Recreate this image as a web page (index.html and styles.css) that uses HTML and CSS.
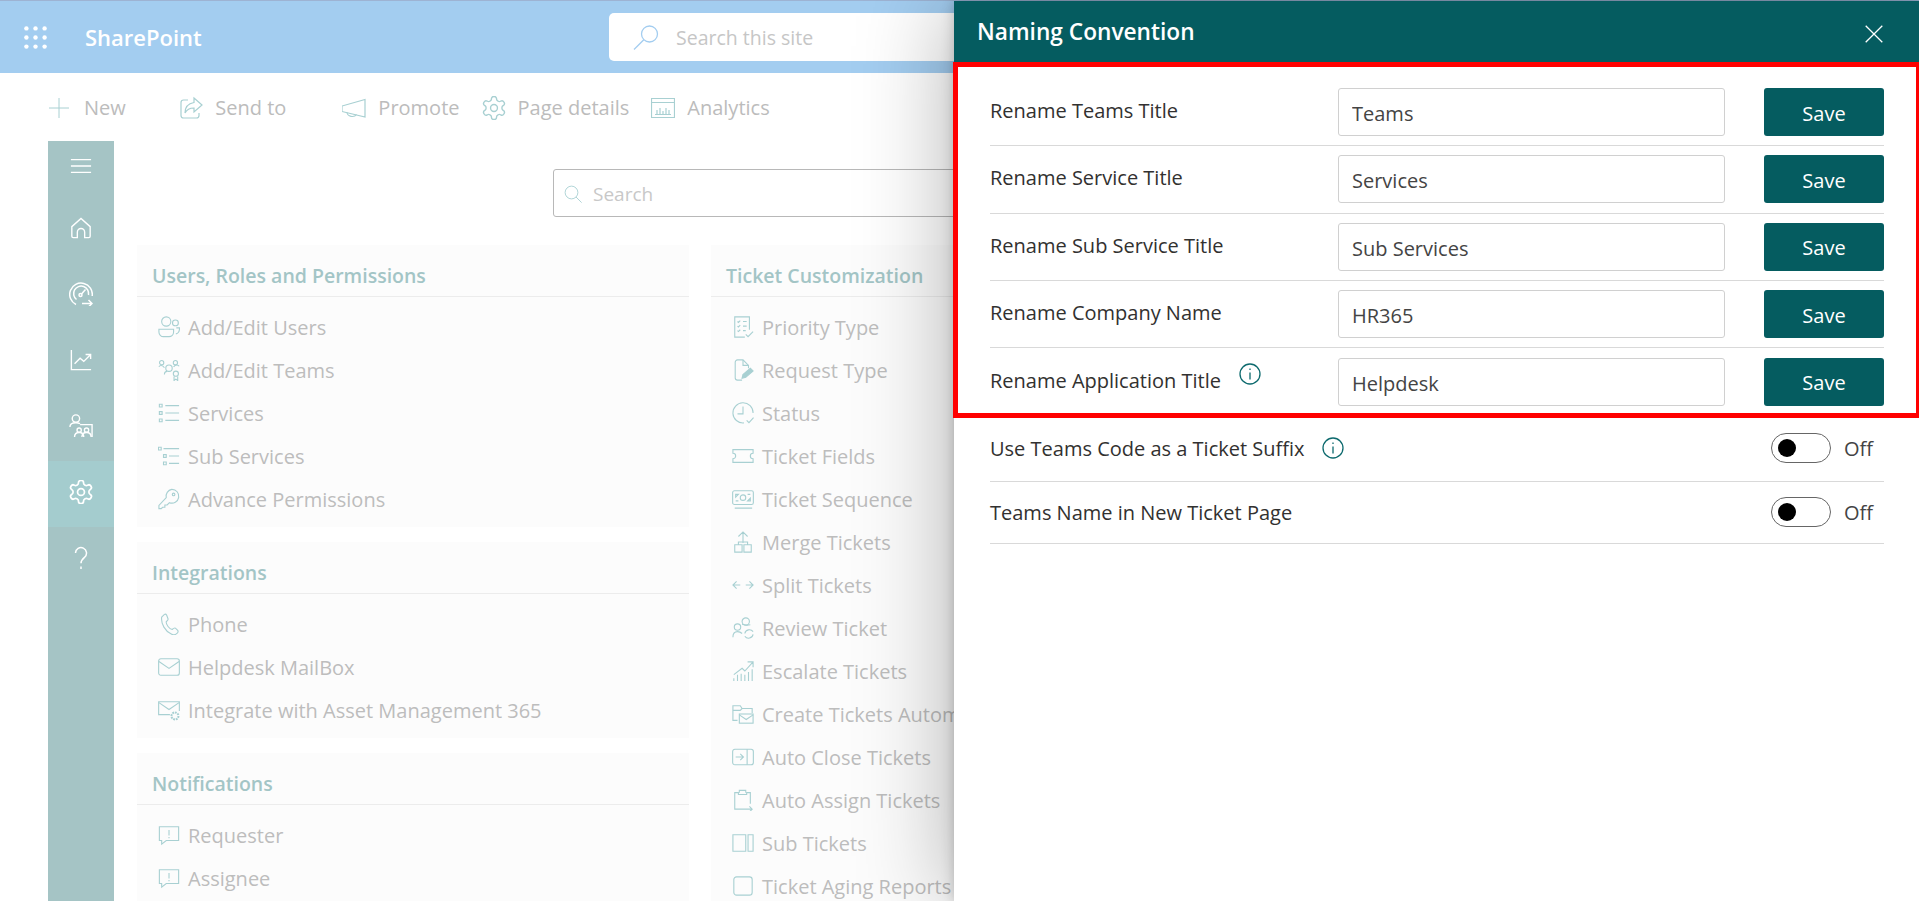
FILE: index.html
```html
<!DOCTYPE html>
<html lang="en">
<head>
    <meta charset="UTF-8">
    <title>Naming Convention</title>
    <link rel="stylesheet" href="styles.css">
</head>
<body>

    <svg class="defs" width="0" height="0">
        <symbol id="gear" viewBox="1.600 1.600 20.800 20.800">
            <path d="M12.22 2h-.44a2 2 0 0 0-2 2v.18a2 2 0 0 1-1 1.73l-.43.25a2 2 0 0 1-2 0l-.15-.08a2 2 0 0 0-2.73.73l-.22.38a2 2 0 0 0 .73 2.73l.15.1a2 2 0 0 1 1 1.72v.51a2 2 0 0 1-1 1.74l-.15.09a2 2 0 0 0-.73 2.73l.22.38a2 2 0 0 0 2.73.73l.15-.08a2 2 0 0 1 2 0l.43.25a2 2 0 0 1 1 1.73V20a2 2 0 0 0 2 2h.44a2 2 0 0 0 2-2v-.18a2 2 0 0 1 1-1.73l.43-.25a2 2 0 0 1 2 0l.15.08a2 2 0 0 0 2.73-.73l.22-.39a2 2 0 0 0-.73-2.73l-.15-.08a2 2 0 0 1-1-1.74v-.5a2 2 0 0 1 1-1.74l.15-.09a2 2 0 0 0 .73-2.73l-.22-.38a2 2 0 0 0-2.73-.73l-.15.08a2 2 0 0 1-2 0l-.43-.25a2 2 0 0 1-1-1.73V4a2 2 0 0 0-2-2z"/>
            <circle cx="12" cy="12" r="3"/>
        </symbol>
        <symbol id="info" viewBox="0 0 22 22">
            <circle cx="11" cy="11" r="10"/>
            <path d="M11 9.500v7M11 5.500v1.600"/>
        </symbol>
        <symbol id="alert" viewBox="0 0 24 24">
            <path d="M1.500 3h21v15H9l-5 4v-4H1.500z"/>
            <path d="M12 6.500v6M12 14.200v1.300"/>
        </symbol>
    </svg>

    <header class="topbar">
        <svg class="waffle" viewBox="0 0 24 24">
            <circle cx="2.500" cy="2.500" r="2.300"/><circle cx="12" cy="2.500" r="2.300"/><circle cx="21.500" cy="2.500" r="2.300"/>
            <circle cx="2.500" cy="12" r="2.300"/><circle cx="12" cy="12" r="2.300"/><circle cx="21.500" cy="12" r="2.300"/>
            <circle cx="2.500" cy="21.500" r="2.300"/><circle cx="12" cy="21.500" r="2.300"/><circle cx="21.500" cy="21.500" r="2.300"/>
        </svg>
        <span class="brand">SharePoint</span>
        <div class="site-search">
            <svg class="site-search-icon" viewBox="0 0 26 25"><circle cx="16.500" cy="9" r="8"/><path d="M10.800 14.800L1 24.500"/></svg>
            <span>Search this site</span>
        </div>
    </header>

    <nav class="commandbar">
        <div class="cmd cmd-new">
            <svg class="ico cmd-ico cmd-plus" viewBox="0 0 24 24"><path d="M12 0v24M0 12h24"/></svg>
            <span>New</span>
        </div>
        <div class="cmd cmd-send">
            <svg class="ico cmd-ico" viewBox="0 0 24 24"><path d="M9 4H4.500A2.500 2.500 0 0 0 2 6.500v13A2.500 2.500 0 0 0 4.500 22h13a2.500 2.500 0 0 0 2.500-2.500V17"/><path d="M15 2l8 7-8 7v-4c-4 0-7 1-9 5 0-6 3-9.500 9-10.500z"/></svg>
            <span>Send to</span>
        </div>
        <div class="cmd">
            <svg class="ico cmd-ico" viewBox="0 0 24 24"><path d="M0 10L23 3.500V21L0 15.500z"/><path d="M5 16.500c.5 4 7 5.500 9.500 2"/></svg>
            <span>Promote</span>
        </div>
        <div class="cmd">
            <svg class="ico cmd-ico"><use href="#gear"/></svg>
            <span>Page details</span>
        </div>
        <div class="cmd">
            <svg class="ico cmd-ico" viewBox="0 0 24 24"><path d="M.5 2.500h23v19H.5zM.5 6.500h23"/><path d="M4 18.500h16M6 18v-4M9 18v-6M12 18v-3M15 18v-6M18 18v-4"/></svg>
            <span>Analytics</span>
        </div>
    </nav>

    <div class="main">
        <aside class="rail">
            <div class="rail-item rail-toggle">
                <svg class="ico rail-ico" viewBox="0 0 24 24"><path d="M1 5h22M1 12h22M1 19h22"/></svg>
            </div>
            <div class="rail-item">
                <svg class="ico rail-ico" viewBox="0 0 24 24"><path d="M2 21V10.500L12 1.500l10 9V21a1.500 1.500 0 0 1-1.500 1.500H16v-6a4 4 0 0 0-8 0v6H3.500A1.500 1.500 0 0 1 2 21z"/></svg>
            </div>
            <div class="rail-item">
                <svg class="ico rail-ico rail-ico-wide" viewBox="0 0 24 24"><path d="M7 22.500A11.300 11.300 0 1 1 23.200 14"/><path d="M7.500 17.500a7.500 7.500 0 1 1 12-4.500"/><circle cx="11.500" cy="13" r="1.500"/><path d="M12.500 12l4-4.500M13 21.500h10M19.500 18l3.500 3.500-3.500 3.500"/></svg>
            </div>
            <div class="rail-item">
                <svg class="ico rail-ico" viewBox="0 0 24 24"><path d="M1.500 1v21.500H23"/><path d="M5 16l6-6 4 3.500L22 6.500M17 6h5.500v5"/></svg>
            </div>
            <div class="rail-item">
                <svg class="ico rail-ico rail-ico-wide" viewBox="0 0 26 26"><circle cx="7.500" cy="5" r="4"/><path d="M1 14c0-3 3-4.500 6.500-4.500 1.500 0 3 .3 4.500 1"/><path d="M12 11.500h13V25"/><circle cx="11" cy="17.500" r="2.300"/><circle cx="19" cy="17.500" r="2.300"/><path d="M6 25c0-3 2-5 5-5s5 2 5 5M14 25c0-3 2-5 5-5s5 2 5 5"/></svg>
            </div>
            <div class="rail-item active">
                <svg class="ico rail-ico rail-ico-wide"><use href="#gear"/></svg>
            </div>
            <div class="rail-item">
                <svg class="ico rail-ico rail-ico-wide" viewBox="0 0 24 24"><path d="M6.500 7a5.500 5.500 0 1 1 9 4.300c-2 1.600-3.500 3-3.500 6"/><path d="M12 20.500V23"/></svg>
            </div>
        </aside>

        <div class="content">
            <div class="finder">
                <svg class="ico finder-ico" viewBox="0 0 24 24"><circle cx="10" cy="10" r="8.500"/><path d="M16 16l7.500 7.500"/></svg>
                <span>Search</span>
            </div>

            <div class="columns">
                <div class="column">
                    <section class="card">
                        <h3 class="card-title">Users, Roles and Permissions</h3>
                        <ul class="card-list">
                            <li><svg class="ico" viewBox="0 0 24 24"><circle cx="9" cy="6" r="5"/><circle cx="19" cy="7.500" r="3.200"/><path d="M1 14.500h16v3a5 5 0 0 1-5 5H6a5 5 0 0 1-5-5z"/><path d="M20 13h3.500c0 4-1 6-4 6.500"/></svg>Add/Edit Users</li>
                            <li><svg class="ico" viewBox="0 0 24 24"><circle cx="4" cy="4" r="2.300"/><circle cx="19" cy="4" r="2.300"/><circle cx="12" cy="10" r="3.500"/><circle cx="19.500" cy="16" r="2.800"/><path d="M1 8.500c1-2 4-2 6 1M23 8c-1-2-4-2-6 .5M7 17c0-2 1-3.500 3-3.500M17.500 19v4.500l2-1.500 2 1.500V19"/></svg>Add/Edit Teams</li>
                            <li><svg class="ico" viewBox="0 0 24 24"><path d="M1.500 2.500h3v3h-3zM1.500 10.500h3v3h-3zM1.500 18.500h3v3h-3zM8 4h15M8 12h15M8 20h15"/></svg>Services</li>
                            <li><svg class="ico" viewBox="0 0 24 24"><path d="M.5 2.500h3v3h-3zM6 10.500h3v3H6zM6 18.500h3v3H6zM6 4h17M12 12h11M12 20h11"/></svg>Sub Services</li>
                            <li><svg class="ico" viewBox="0 0 24 24"><path d="M15 1.500a7.500 7.500 0 1 1-2.500 14.500l-2.500 2.500H7.500V21H5l-1.500 1.500H1V19l8-8.500A7.500 7.500 0 0 1 15 1.500z"/><circle cx="17" cy="7" r="1.400"/></svg>Advance Permissions</li>
                        </ul>
                    </section>

                    <section class="card">
                        <h3 class="card-title">Integrations</h3>
                        <ul class="card-list">
                            <li><svg class="ico" viewBox="0 0 24 24"><path d="M4 4.500l3-3c1-.5 2 0 2.500 1l1.500 4c.3 1-.5 1.800-2 3-.5 3 3.500 8 6.500 8.500 1.500-1.500 2.500-2 3.500-1.500l2.500 2.500c.7 1 .5 2-.5 3-2 2-4 2.500-6.500 1C8 20 3 12 4 4.500z"/></svg>Phone</li>
                            <li><svg class="ico" viewBox="0 0 24 24"><rect x=".7" y="3" width="22.600" height="18" rx="2.500"/><path d="M1 6l11 7.500L23 6"/></svg>Helpdesk MailBox</li>
                            <li><svg class="ico" viewBox="0 0 24 24"><path d="M13 17H.7V3h22.600v10"/><path d="M1 4l11 7.500L23 4"/><circle cx="18.500" cy="18.500" r="3.800" stroke-dasharray="2 .9" stroke-width="2.200"/></svg>Integrate with Asset Management 365</li>
                        </ul>
                    </section>

                    <section class="card">
                        <h3 class="card-title">Notifications</h3>
                        <ul class="card-list">
                            <li><svg class="ico"><use href="#alert"/></svg>Requester</li>
                            <li><svg class="ico"><use href="#alert"/></svg>Assignee</li>
                        </ul>
                    </section>
                </div>

                <div class="column">
                    <section class="card">
                        <h3 class="card-title">Ticket Customization</h3>
                        <ul class="card-list">
                            <li><svg class="ico" viewBox="0 0 24 24"><path d="M19 15V1H3v22h11"/><path d="M6 6l1 1 2-2M12 6h4M6 11l1 1 2-2M12 11h4M6 16l1 1 2-2M12 16h3M15 20l2.500 2.500L23 17"/></svg>Priority Type</li>
                            <li><svg class="ico" viewBox="0 0 24 24"><path d="M11 23H6a2.500 2.500 0 0 1-2.500-2.500v-17A2.500 2.500 0 0 1 6 1h6l6 6v3"/><path d="M12 1v6h6"/><path class="solid" d="M11 21l1-4 8-7 3 3-8 7z"/></svg>Request Type</li>
                            <li><svg class="ico" viewBox="0 0 24 24"><path d="M13 22.800A11 11 0 1 1 23 12"/><path d="M12 5v8H6M16 20l2.500 2.500L23.500 17"/></svg>Status</li>
                            <li><svg class="ico" viewBox="0 0 24 24"><path d="M1 5h22v4a3 3 0 0 0 0 6v4H1v-4a3 3 0 0 0 0-6z"/></svg>Ticket Fields</li>
                            <li><svg class="ico" viewBox="0 0 24 24"><rect x=".7" y="3" width="22.600" height="15" rx="2"/><circle cx="12" cy="10.500" r="3"/><path d="M3 22h19M4 7h3l-3 3zM20 14h-3l3-3zM4 14h3M17 7h3"/></svg>Ticket Sequence</li>
                            <li><svg class="ico" viewBox="0 0 24 24"><path d="M3 15h8v8H3zM13 15h8v8h-8zM12 13V1M7 6l5-5 5 5M7 15v-3h10v3"/></svg>Merge Tickets</li>
                            <li><svg class="ico" viewBox="0 0 24 24"><path d="M1 12h8M5 8l-4 4 4 4M15 12h8M19 8l4 4-4 4"/></svg>Split Tickets</li>
                            <li><svg class="ico" viewBox="0 0 24 24"><circle cx="15" cy="5" r="4"/><circle cx="6" cy="11" r="3.500"/><path d="M1 22c0-4 2-6 5-6s4 1 5 2M11 8c3 1 6 1 9 .5"/><path d="M14 18a5 5 0 0 1 9-2M23 19a5 5 0 0 1-9 2"/></svg>Review Ticket</li>
                            <li><svg class="ico" viewBox="0 0 24 24"><path d="M2 16l9-7 3 3 9-10M17 2h6v6M2 23v-3M6 23v-7M10 23v-8M14 23v-7M18 23v-10M22 23V10"/></svg>Escalate Tickets</li>
                            <li><svg class="ico" viewBox="0 0 24 24"><path d="M6 19H1V3h8l2 3h11v5"/><path d="M1 8h8l2-2"/><rect x="8" y="12" width="15" height="10"/><path d="M8 13l7.500 5L23 13"/></svg>Create Tickets Automatically</li>
                            <li><svg class="ico" viewBox="0 0 24 24"><rect x=".7" y="3.500" width="22.600" height="17" rx="2.500"/><path d="M16.500 3.500v17M4 12h8M9 8.500l3.500 3.500L9 15.500"/></svg>Auto Close Tickets</li>
                            <li><svg class="ico" viewBox="0 0 24 24"><path d="M12 22H3V4h4v2h9V4h4v12"/><path d="M8 4V1.500h7V4M12 22h10M19 19l3 3-3 3"/></svg>Auto Assign Tickets</li>
                            <li><svg class="ico" viewBox="0 0 24 24"><path d="M1 3h14v18H1zM17.500 3H23v18h-5.500z"/></svg>Sub Tickets</li>
                            <li><svg class="ico" viewBox="0 0 24 24"><rect x="2" y="2" width="20" height="20" rx="3"/></svg>Ticket Aging Reports</li>
                        </ul>
                    </section>
                </div>
            </div>
        </div>
    </div>

    <div class="panel">
        <div class="panel-head">
            <h2>Naming Convention</h2>
            <svg class="panel-close" viewBox="0 0 18 18"><path d="M.7.700l16.600 16.600M17.300.700L.7 17.300"/></svg>
        </div>

        <div class="frame">
            <div class="row">
                <label class="row-label">Rename Teams Title</label>
                <input class="row-input" type="text" value="Teams">
                <button class="save">Save</button>
            </div>
            <div class="row">
                <label class="row-label">Rename Service Title</label>
                <input class="row-input" type="text" value="Services">
                <button class="save">Save</button>
            </div>
            <div class="row">
                <label class="row-label">Rename Sub Service Title</label>
                <input class="row-input" type="text" value="Sub Services">
                <button class="save">Save</button>
            </div>
            <div class="row">
                <label class="row-label">Rename Company Name</label>
                <input class="row-input" type="text" value="HR365">
                <button class="save">Save</button>
            </div>
            <div class="row">
                <label class="row-label">Rename Application Title <svg class="info info-raised"><use href="#info"/></svg></label>
                <input class="row-input" type="text" value="Helpdesk">
                <button class="save">Save</button>
            </div>
        </div>

        <div class="options">
            <div class="option">
                <span class="option-label">Use Teams Code as a Ticket Suffix <svg class="info"><use href="#info"/></svg></span>
                <span class="toggle"><span class="knob"></span></span>
                <span class="toggle-text">Off</span>
            </div>
            <div class="option">
                <span class="option-label">Teams Name in New Ticket Page</span>
                <span class="toggle"><span class="knob"></span></span>
                <span class="toggle-text">Off</span>
            </div>
        </div>
    </div>

</body>
</html>
```

FILE: styles.css
```css
* {
    box-sizing: border-box;
}
body {
    margin: 0;
    height: 901px;
    overflow: hidden;
    position: relative;
    background: #fff;
    font-family: "Open Sans", "Noto Sans", sans-serif;
    font-size: 20px;
    color: #323130;
}
.defs {
    position: absolute;
}

/* top bar */
.topbar {
    height: 73px;
    display: flex;
    align-items: center;
    padding-left: 24px;
    background: #a3cdf0;
    border-top: 1px solid #9db3d3;
}
.waffle {
    width: 23px;
    height: 23px;
    fill: #fff;
}
.brand {
    width: 562px;
    padding-left: 38px;
    color: #fff;
    font-size: 22px;
    font-weight: 600;
}
.site-search {
    width: 700px;
    height: 48px;
    display: flex;
    align-items: center;
    padding-left: 24px;
    background: #fff;
    border-radius: 5px;
    font-size: 19.5px;
    color: #c6c6c6;
}
.site-search-icon {
    width: 26px;
    height: 25px;
    margin-right: 17px;
    fill: none;
    stroke: #a3cdf0;
    stroke-width: 1.3;
}

/* command bar */
.commandbar {
    height: 68px;
    display: flex;
    align-items: center;
    padding: 1px 0 0 49px;
    color: #bcbcbc;
}
.cmd {
    display: flex;
    align-items: center;
    gap: 12px;
    margin-right: 22px;
}
.cmd-new {
    margin-right: 53.5px;
}
.cmd-send {
    margin-right: 56px;
}
.ico {
    width: 22px;
    height: 22px;
    flex: none;
    fill: none;
    stroke: #a8d0d2;
    stroke-width: 1.2;
}
.cmd-ico {
    width: 24px;
    height: 24px;
}
.cmd-plus {
    width: 20px;
    height: 20px;
    margin-right: 3px;
}
.solid {
    fill: #a8d0d2;
}

/* left rail */
.main {
    display: flex;
    height: 760px;
}
.rail {
    width: 66px;
    margin-left: 48px;
    flex: none;
    background: #a5c4c5;
}
.rail-item {
    height: 66px;
    padding-bottom: 4px;
    display: flex;
    align-items: center;
    justify-content: center;
}
.rail-toggle {
    height: 56px;
    padding-bottom: 6px;
}
.rail-item.active {
    background: #a4ccce;
}
.rail-ico {
    stroke: #fff;
    stroke-width: 1.5;
}
.rail-ico-wide {
    width: 24px;
    height: 24px;
}

/* page content */
.content {
    margin-left: 23px;
    flex: 1;
    min-width: 0;
}
.finder {
    margin: 28px 0 0 416px;
    width: 700px;
    height: 48px;
    display: flex;
    align-items: center;
    gap: 11px;
    padding: 1px 0 0 10px;
    border: 1px solid #b8b8b8;
    border-radius: 3px;
    font-size: 19px;
    color: #c8c8c8;
}
.finder-ico {
    width: 18px;
    height: 18px;
}
.columns {
    display: grid;
    grid-template-columns: 552px 552px;
    gap: 22px;
    margin-top: 28px;
}
.card {
    background: #fcfcfc;
    margin-bottom: 15px;
}
.card-title {
    margin: 0;
    height: 52px;
    padding: 18px 0 0 15px;
    font-size: 19.5px;
    line-height: 26px;
    font-weight: 600;
    color: #a3c5c6;
    border-bottom: 1px solid #ececec;
}
.card-list {
    list-style: none;
    margin: 0;
    padding: 8.5px 0 6.5px 21px;
}
.card-list li {
    height: 43px;
    display: flex;
    align-items: center;
    gap: 8px;
    color: #bdbdbd;
    white-space: nowrap;
}

/* side panel */
.panel {
    position: absolute;
    top: 1px;
    right: 0;
    bottom: 0;
    width: 965px;
    background: #fff;
    box-shadow: 0 0 90px rgba(0, 0, 0, 0.32), 0 0 12px rgba(0, 0, 0, 0.2);
}
.panel-head {
    height: 61px;
    display: flex;
    align-items: center;
    justify-content: space-between;
    padding: 0 36px 0 23px;
    background: #055c60;
    color: #fff;
}
.panel-head h2 {
    margin: 0;
    font-size: 22.7px;
    font-weight: 600;
}
.panel-close {
    width: 18px;
    height: 18px;
    margin-top: 5px;
    fill: none;
    stroke: #fff;
    stroke-width: 1.3;
}
.frame {
    margin: 0 -2px 0 -1px;
    padding: 12px 32px 0;
    height: 356px;
    border: 5px solid #f00;
}
.row {
    display: flex;
    align-items: center;
    height: 67.33px;
    border-bottom: 1px solid #d9d9d9;
}
.row:last-child {
    border-bottom: 0;
}
.row-label {
    width: 348px;
    padding-bottom: 3px;
    display: flex;
    align-items: center;
}
.row-input {
    width: 387px;
    height: 48px;
    padding: 3px 13px 0;
    border: 1px solid #d0d0d0;
    border-radius: 3px;
    font-family: inherit;
    font-size: 20px;
    color: #444;
}
.save {
    width: 120px;
    height: 48px;
    margin-left: 39px;
    padding-top: 3px;
    border: none;
    border-radius: 3px;
    background: #055c60;
    color: #fff;
    font-family: inherit;
    font-size: 20px;
}
.info {
    width: 22px;
    height: 22px;
    margin-left: 18px;
    flex: none;
    fill: none;
    stroke: #0d6a6e;
    stroke-width: 1.3;
}
.info-raised {
    position: relative;
    top: -6px;
}
.options {
    padding: 0 35px 0 36px;
}
.option {
    display: flex;
    align-items: center;
    height: 64px;
    padding-bottom: 3px;
    border-bottom: 1px solid #d9d9d9;
}
.option + .option {
    height: 62px;
    padding-bottom: 1px;
}
.option-label {
    flex: 1;
    display: flex;
    align-items: center;
}
.toggle {
    width: 60px;
    height: 30px;
    display: flex;
    align-items: center;
    padding-left: 6px;
    border: 1px solid #666;
    border-radius: 15px;
}
.knob {
    width: 18px;
    height: 18px;
    border-radius: 50%;
    background: #000;
}
.toggle-text {
    width: 53px;
    padding-left: 13px;
    color: #444;
}
```
